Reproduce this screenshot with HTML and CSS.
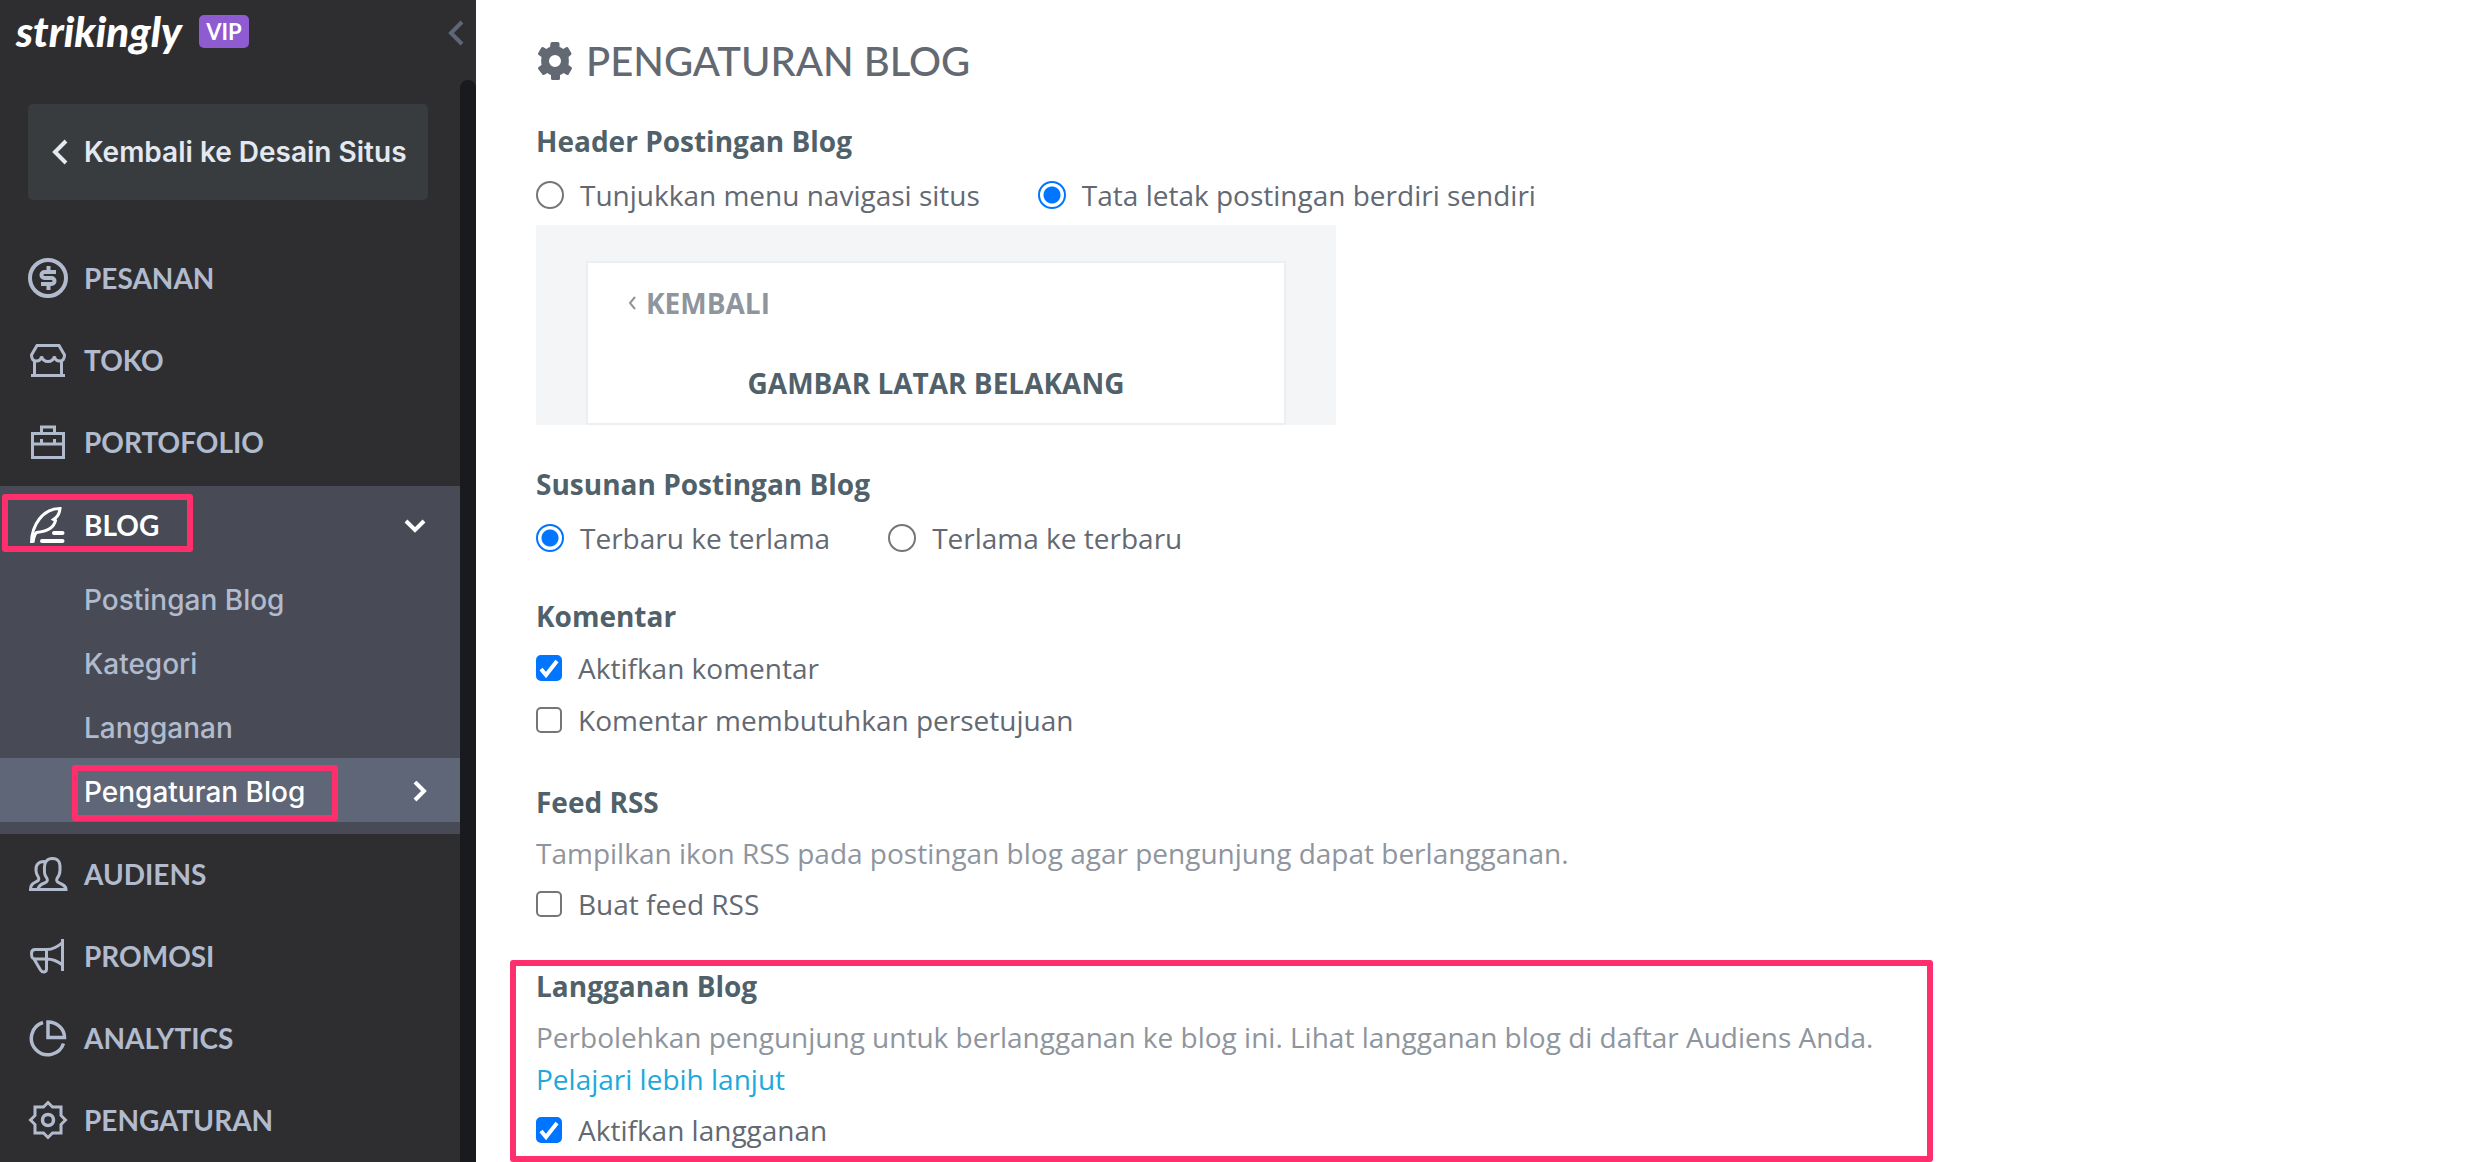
FILE: index.html
```html
<!DOCTYPE html>
<html lang="id">
<head>
<meta charset="UTF-8">
<meta name="viewport" content="width=device-width, initial-scale=1.0">
<title>Pengaturan Blog</title>
<link rel="stylesheet" href="styles.css">
</head>
<body>
<aside class="sidebar">
  <header class="brand">
    <a href="#" class="logo">strikingly</a>
    <span class="vip">VIP</span>
    <button class="collapse" type="button" aria-label="Tutup menu">
      <svg width="16" height="26" viewBox="0 0 16 26"><path d="M14 2 3 13l11 11" stroke-width="4"/></svg>
    </button>
  </header>

  <div class="sidebar-body">
    <div class="sidebar-scroll">
      <a href="#" class="back-link">
        <svg width="16" height="26" viewBox="0 0 16 26"><path d="M14 2 3 13l11 11" stroke-width="4"/></svg>
        Kembali ke Desain Situs
      </a>

      <nav class="menu">
        <a href="#" class="menu-item">
          <svg class="icon" viewBox="0 0 40 40"><circle cx="20" cy="20" r="18" stroke-width="4"/><path d="M28 14H16.500a3 3 0 0 0 0 6h7a3 3 0 0 1 0 6H13M20.500 8v6M20.500 26v6" stroke-width="4"/></svg>
          PESANAN
        </a>
        <a href="#" class="menu-item">
          <svg class="icon" viewBox="0 0 40 40"><path d="M9 5.500h22L36.500 15c0 4-2 6-5 6-3 0-4.500-1.500-5-4.500-1 3-3.500 5-6.500 5s-5.500-2-6.500-5c-.5 3-2 4.500-5 4.500s-5-2-5-6zM6.500 21v14.500M33.500 21v14.500M3 35.500h34"/></svg>
          TOKO
        </a>
        <a href="#" class="menu-item">
          <svg class="icon" viewBox="0 0 40 40"><path d="M4.500 11.500h31v24h-31zM13.500 11V5h13v6M4.500 22h31M13.500 17v5M26.500 17v5"/></svg>
          PORTOFOLIO
        </a>

        <div class="menu-group">
          <a href="#" class="menu-item open">
            <svg class="icon" viewBox="0 0 40 40"><path d="M3.500 38C3.500 20 15 3.500 32 3.500c-.5 5-2 7.500-4.500 9.500l-2 1.500 2 1C26 23 18 26.500 8.500 27.500c-2 2-3 6-3.500 10"/><path d="M26 28h8.500M14 36h20.500" stroke-width="4" stroke-linecap="round"/></svg>
            BLOG
            <svg class="arrow" viewBox="0 0 22 22"><path d="M2 7l9 9 9-9"/></svg>
            <span class="callout callout-blog"></span>
          </a>
          <a href="#" class="submenu-item">Postingan Blog</a>
          <a href="#" class="submenu-item">Kategori</a>
          <a href="#" class="submenu-item">Langganan</a>
          <a href="#" class="submenu-item active">
            Pengaturan Blog
            <svg class="arrow" viewBox="0 0 22 22"><path d="M9 1l9 9-9 9"/></svg>
            <span class="callout callout-settings"></span>
          </a>
        </div>

        <a href="#" class="menu-item">
          <svg class="icon" viewBox="0 0 40 40"><path d="M10 35.500c.5-3.500 2-5 6.500-6.500 2.500-1 3.500-2 2.500-4.500-2-3-3-5-2.500-8C16 9 18 4.500 24.500 4.500s8 4.500 7.500 11.500c0 4-1 6-3 8.500-1 2.500 0 3.500 2.500 4.500 4 2 6.500 3 6.500 6.500zM17 7.500c-7-.5-9.500 4-9 9 0 3 1 4.500 2 6 1.500 2.500 1 4-1.500 5-4 2-6 3.500-6 8h8"/></svg>
          AUDIENS
        </a>
        <a href="#" class="menu-item">
          <svg class="icon" viewBox="0 0 40 40"><path d="M34.500 3v32M19 13.500H7c-3 0-3.500 1.500-3.500 4 0 4.500 1 5.500 4 5.500h12M19 13.500c6 0 11-3 15.500-7M19 23c6 0 11 2.500 15.500 6M18.500 14v19c0 4-4.500 3.500-6 1L6 23"/></svg>
          PROMOSI
        </a>
        <a href="#" class="menu-item">
          <svg class="icon" viewBox="0 0 40 40"><path d="M15 4.500A16.500 16.500 0 1 0 35.500 25.500M20 4v15.500h16.500C36.500 11 29 4 20 4z" stroke-width="3.500"/></svg>
          ANALYTICS
        </a>
        <a href="#" class="menu-item">
          <svg class="icon" viewBox="0 0 40 40"><path d="M20 2.500l4.500 4.500H33v8.500l4.500 4.500-4.500 4.500V33h-8.500L20 37.500 15.500 33H7v-8.500L2.500 20 7 15.500V7h8.500z"/><circle cx="20" cy="20" r="5.500" stroke-width="3.500"/></svg>
          PENGATURAN
        </a>
      </nav>
    </div>
    <div class="scroll-track"></div>
  </div>
</aside>

<main class="content">
  <h1>
    <svg class="gear" viewBox="0 0 38 38"><path fill-rule="evenodd" d="M14.500 1.500Q14.500 0 16 0h6q1.500 0 1.500 1.500V5q2 .7 3.600 2l3-1.800q1.300-.8 2 .4l3.200 5.400q.7 1.200-.5 2L32.500 15q.8 4 0 8l2.800 2q1.200.8.5 2l-3.200 5.400q-.7 1.200-2 .4l-3-1.800q-1.600 1.300-3.600 2v3.500q0 1.500-1.500 1.500h-6q-1.500 0-1.500-1.500V33q-2-.7-3.600-2l-3 1.800q-1.300.8-2-.4L2.200 27q-.7-1.200.5-2l2.800-2q-.8-4 0-8l-2.800-2q-1.200-.8-.5-2l3.200-5.400q.7-1.200 2-.4l3 1.800q1.600-1.300 3.600-2zM19 13a6 6 0 1 0 0 12 6 6 0 0 0 0-12z"/></svg>
    PENGATURAN BLOG
  </h1>

  <section>
    <h2>Header Postingan Blog</h2>
    <div class="radio-row">
      <label><input type="radio" name="header">Tunjukkan menu navigasi situs</label>
      <label><input type="radio" name="header" checked>Tata letak postingan berdiri sendiri</label>
    </div>
    <div class="preview">
      <div class="preview-card">
        <div class="preview-back">
          <svg width="8" height="14" viewBox="0 0 8 14"><path d="M7 1 2 7l5 6"/></svg>
          KEMBALI
        </div>
        <div class="preview-title">GAMBAR LATAR BELAKANG</div>
      </div>
    </div>
  </section>

  <section>
    <h2>Susunan Postingan Blog</h2>
    <div class="radio-row">
      <label><input type="radio" name="order" checked>Terbaru ke terlama</label>
      <label><input type="radio" name="order">Terlama ke terbaru</label>
    </div>
  </section>

  <section>
    <h2>Komentar</h2>
    <label class="check-row"><input type="checkbox" checked>Aktifkan komentar</label>
    <label class="check-row"><input type="checkbox">Komentar membutuhkan persetujuan</label>
  </section>

  <section>
    <h2>Feed RSS</h2>
    <p>Tampilkan ikon RSS pada postingan blog agar pengunjung dapat berlangganan.</p>
    <label class="check-row"><input type="checkbox">Buat feed RSS</label>
  </section>

  <section class="subscription">
    <h2>Langganan Blog</h2>
    <p>Perbolehkan pengunjung untuk berlangganan ke blog ini. Lihat langganan blog di daftar Audiens Anda. <a href="#">Pelajari lebih lanjut</a></p>
    <label class="check-row"><input type="checkbox" checked>Aktifkan langganan</label>
    <span class="callout callout-subscription"></span>
  </section>
</main>
</body>
</html>
```

FILE: styles.css
```css
* {
  box-sizing: border-box;
}
body {
  margin: 0;
  display: flex;
  min-height: 100vh;
  font-family: 'Open Sans', sans-serif;
  font-size: 28px;
  color: #636972;
  background-color: #fff;
}
a {
  text-decoration: none;
}
svg {
  flex: none;
  fill: none;
  stroke: currentColor;
}

/* Sidebar */
.sidebar {
  display: flex;
  flex-direction: column;
  flex: none;
  width: 476px;
  background-color: #2e2e30;
  color: #b1bbcd;
}
.brand {
  display: flex;
  align-items: flex-start;
  height: 80px;
  padding: 10px 12px 0 16px;
}
.logo {
  width: 183px;
  font-family: Lato, sans-serif;
  font-size: 42px;
  line-height: 42px;
  font-weight: 900;
  font-style: italic;
  color: #fff;
}
.vip {
  margin-top: 5px;
  width: 50px;
  border-radius: 5px;
  background-color: #8f5bd1;
  color: #fff;
  font-family: Lato, sans-serif;
  font-size: 22px;
  line-height: 33px;
  font-weight: 700;
  text-align: center;
}
.collapse {
  display: flex;
  margin: 10px 0 0 auto;
  padding: 0;
  border: none;
  background: none;
  color: #5f6678;
  cursor: pointer;
}
.sidebar-body {
  display: flex;
  flex: 1;
}
.sidebar-scroll {
  flex: 1;
}
.scroll-track {
  width: 16px;
  border-radius: 8px 8px 0 0;
  background-color: #191a1e;
}
.back-link {
  display: flex;
  align-items: center;
  gap: 16px;
  height: 96px;
  margin: 24px 32px 38px 28px;
  padding-left: 24px;
  border-radius: 5px;
  background-color: #393c3e;
  color: #e4e8f0;
  font-family: Inter, sans-serif;
  font-size: 28px;
  font-weight: 600;
  white-space: nowrap;
}
.menu-item {
  display: flex;
  align-items: center;
  gap: 16px;
  height: 82px;
  padding: 0 34px 2px 28px;
  color: inherit;
  font-family: Lato, sans-serif;
  font-size: 28px;
  font-weight: 700;
}
.icon {
  width: 40px;
  height: 40px;
  stroke-width: 3;
}
.arrow {
  width: 22px;
  height: 22px;
  margin-left: auto;
  stroke-width: 4;
}
.menu-group {
  margin-top: 2px;
  padding-bottom: 12px;
  background-color: #484b56;
}
.menu-item.open {
  position: relative;
  height: 80px;
  color: #fff;
}
.submenu-item {
  position: relative;
  display: flex;
  align-items: center;
  height: 64px;
  padding: 4px 32px 0 84px;
  color: inherit;
  font-family: Inter, sans-serif;
  font-weight: 500;
}
.submenu-item.active {
  background-color: #5e6677;
  color: #fff;
}

/* Highlight frames */
.callout {
  position: absolute;
  border: 6px solid #ff2f6e;
  border-radius: 3px;
  pointer-events: none;
}
.callout-blog {
  top: 8px;
  left: 2px;
  width: 191px;
  height: 58px;
}
.callout-settings {
  top: 7px;
  left: 72px;
  width: 266px;
  height: 56px;
}
.callout-subscription {
  inset: 0 -26px;
}

/* Content */
.content {
  flex: 1;
  padding: 33px 60px 0;
}
h1 {
  display: flex;
  align-items: center;
  gap: 12px;
  height: 56px;
  margin: 0 0 26px;
  font-family: Lato, sans-serif;
  font-size: 40px;
  font-weight: 500;
}
.gear {
  width: 38px;
  height: 38px;
  fill: currentColor;
  stroke: none;
}
section {
  max-width: 1371px;
  margin-bottom: 30px;
}
h2 {
  margin: 0;
  font-size: 28px;
  line-height: 52px;
  font-weight: 700;
  color: #50616a;
}
p {
  margin: 0;
  padding: 4px 0;
  line-height: 42px;
  color: #8f959d;
}
p a {
  color: #1ca9dd;
}
.radio-row {
  display: flex;
  gap: 58px;
  padding-top: 6px;
}
.radio-row label {
  display: flex;
  align-items: center;
  gap: 16px;
  height: 44px;
}
.check-row {
  display: flex;
  align-items: center;
  gap: 16px;
  height: 52px;
}
input {
  appearance: none;
  flex: none;
  margin: 0;
  border: 2px solid #767676;
  background-color: #fff;
}
input[type="radio"] {
  width: 28px;
  height: 28px;
  border-radius: 50%;
}
input[type="radio"]:checked {
  border-color: #0075ff;
  background: radial-gradient(circle, #0075ff 8px, #fff 9px);
}
input[type="checkbox"] {
  width: 26px;
  height: 26px;
  border-radius: 5px;
}
input[type="checkbox"]:checked {
  border-color: #0075ff;
  background: #0075ff url("data:image/svg+xml,%3Csvg xmlns='http://www.w3.org/2000/svg' viewBox='0 0 22 22'%3E%3Cpath d='M3 12l5 6L19 4' fill='none' stroke='white' stroke-width='4'/%3E%3C/svg%3E") center / 22px no-repeat;
}
.preview {
  max-width: 800px;
  margin: 8px 0 33px;
  padding: 36px 50px 0;
  background-color: #f4f5f7;
}
.preview-card {
  height: 164px;
  padding: 14px 40px 0;
  border: 2px solid #edeef0;
  background-color: #fff;
  font-weight: 700;
}
.preview-back {
  display: flex;
  align-items: center;
  gap: 10px;
  height: 52px;
  color: #8f959d;
}
.preview-back svg {
  stroke-width: 2;
}
.preview-title {
  margin-top: 28px;
  line-height: 52px;
  text-align: center;
  color: #50616a;
}
.subscription {
  position: relative;
  margin-bottom: 0;
  padding-bottom: 6px;
}
```
